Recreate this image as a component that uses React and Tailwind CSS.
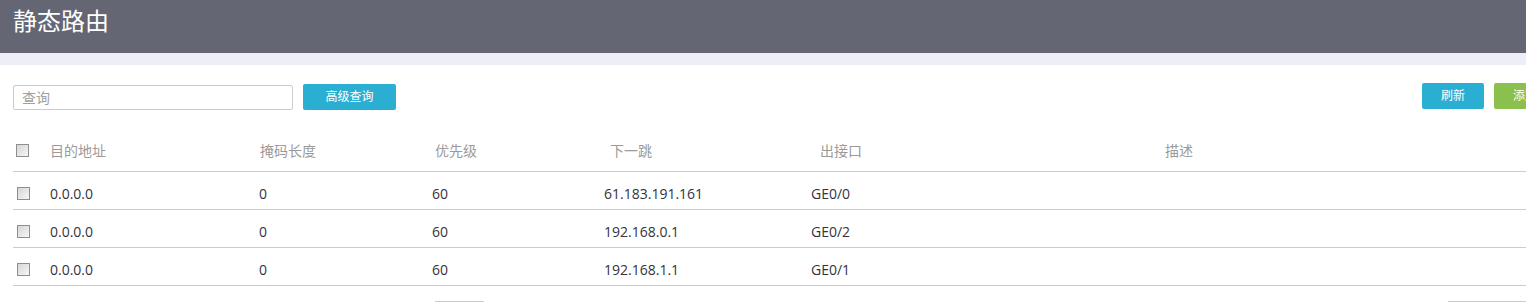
import React from 'react'

const font = { fontFamily: '"Open Sans", "Noto Sans CJK SC", sans-serif' }

const routes = [
  { dest: '0.0.0.0', mask: '0', prio: '60', next: '61.183.191.161', iface: 'GE0/0', desc: '' },
  { dest: '0.0.0.0', mask: '0', prio: '60', next: '192.168.0.1', iface: 'GE0/2', desc: '' },
  { dest: '0.0.0.0', mask: '0', prio: '60', next: '192.168.1.1', iface: 'GE0/1', desc: '' },
]

const Checkbox = () => (
  <div className="w-[13px] h-[13px] border border-[#8e8e8e] bg-gradient-to-br from-[#d6d6d6] to-[#f7f7f7] shrink-0" />
)

export default function App() {
  return (
    <div className="w-[1526px] h-[302px] overflow-hidden bg-white" style={font}>
      <div className="w-[1569px]">
        {/* title bar */}
        <div className="h-[53px] bg-[#646674] flex items-center pl-[13px] pb-[11px]">
          <h1 className="text-[24px] leading-none text-white font-normal">静态路由</h1>
        </div>
        <div className="h-[12px] bg-[#eeeef6]" />

        {/* toolbar */}
        <div className="flex items-center px-[13px] pt-[19px]">
          <input
            type="text"
            placeholder="查询"
            className="w-[280px] h-[25px] border border-[#cccccc] rounded-[2px] px-[8px] text-[14px] text-[#333] placeholder:text-[#a0a0a0] outline-none"
          />
          <button className="ml-[10px] w-[93px] h-[26px] bg-[#2aafd3] text-white text-[12px] rounded-[2px]">高级查询</button>
          <div className="ml-auto flex items-center gap-[10px] -mt-[2px]">
            <button className="w-[62px] h-[26px] bg-[#2aafd3] text-white text-[12px] rounded-[2px]">刷新</button>
            <button className="w-[62px] h-[26px] bg-[#8bbf4e] text-white text-[12px] rounded-[2px]">添加</button>
          </div>
        </div>

        {/* table */}
        <div className="mt-[19px] mx-[13px]">
          <div className="h-[43px] flex items-center border-b border-[#cccccc] text-[14px] text-[#9a9a9a]">
            <div className="w-[37px] pl-[3px]"><Checkbox /></div>
            <div className="w-[209px]">目的地址</div>
            <div className="w-[173px] pl-[1px]">掩码长度</div>
            <div className="w-[172px] pl-[3px]">优先级</div>
            <div className="w-[207px] pl-[6px]">下一跳</div>
            <div className="w-[354px] pl-[9px]">出接口</div>
            <div className="flex-1">描述</div>
          </div>
          {routes.map((r, i) => (
            <div key={i} className="h-[38px] pt-[5px] flex items-center border-b border-[#cccccc] text-[14px] text-[#333340]">
              <div className="w-[37px] pl-[4px]"><Checkbox /></div>
              <div className="w-[209px]">{r.dest}</div>
              <div className="w-[173px]">{r.mask}</div>
              <div className="w-[172px]">{r.prio}</div>
              <div className="w-[207px]">{r.next}</div>
              <div className="w-[354px]">{r.iface}</div>
              <div className="flex-1">{r.desc}</div>
            </div>
          ))}
        </div>

        {/* pagination */}
        <div className="mt-[15px] flex items-start px-[13px]">
          <div className="ml-[422px] w-[49px] h-[24px] border border-[#cccccc]" />
          <div className="ml-auto flex h-[24px] border border-[#cccccc]">
            <div className="w-[43px] border-r border-[#cccccc]" />
            <div className="w-[43px] border-r border-[#cccccc]" />
            <div className="w-[20px]" />
          </div>
        </div>
      </div>
    </div>
  )
}
